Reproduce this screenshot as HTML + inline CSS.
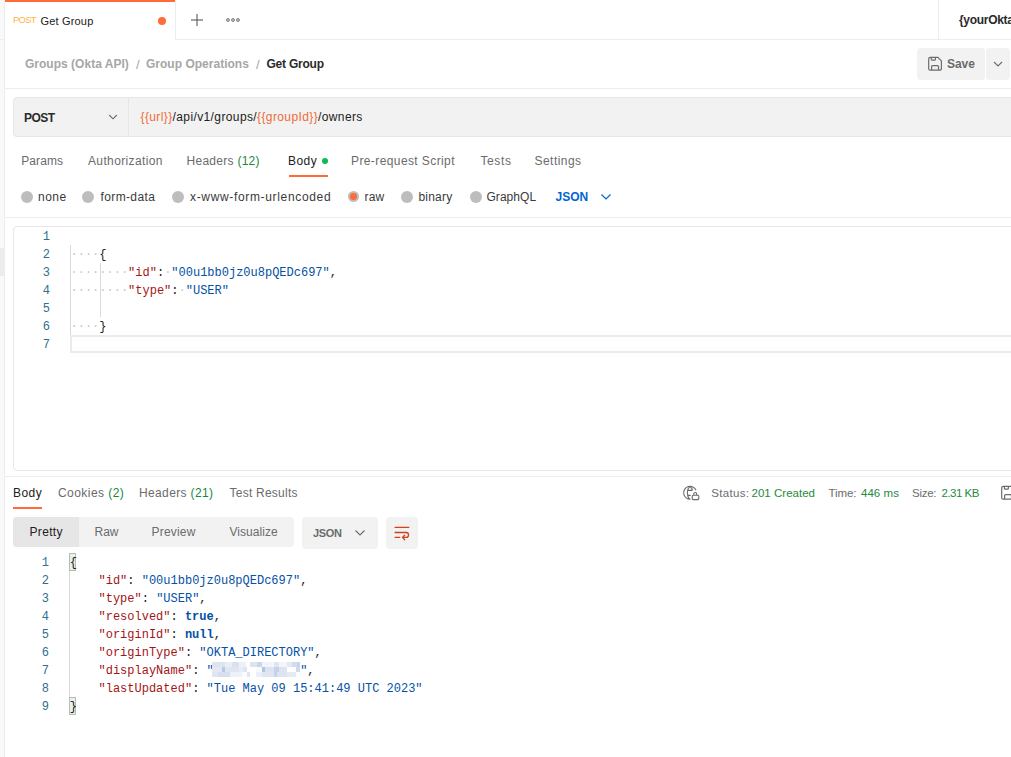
<!DOCTYPE html>
<html><head><meta charset="utf-8"><style>
html,body{margin:0;padding:0;width:1011px;height:757px;overflow:hidden;background:#fff;position:relative}
</style></head><body>
<div style="position:absolute;left:0px;top:0px;width:4px;height:757px;background:#f9f9f9"></div><div style="position:absolute;left:4px;top:0px;width:1px;height:757px;background:#ededed"></div><div style="position:absolute;left:0px;top:248px;width:4px;height:28px;background:#ececec"></div><div style="position:absolute;left:0px;top:39px;width:4px;height:1px;background:#ededed"></div><div style="position:absolute;left:5px;top:39px;width:1006px;height:1px;background:#ededed"></div><div style="position:absolute;left:5px;top:0px;width:170px;height:40px;background:#fff"></div><div style="position:absolute;left:5px;top:0px;width:170px;height:2px;background:#ff6c37"></div><div style="position:absolute;left:175px;top:0px;width:1px;height:39px;background:#ededed"></div><div id="t0" style="position:absolute;left:13.00px;top:14.66px;font-family:'Liberation Sans', sans-serif;font-size:9.5px;font-weight:400;color:#ffb547;line-height:9.5px;white-space:pre;letter-spacing:-0.800px;">POST</div><div id="t1" style="position:absolute;left:40.50px;top:16.39px;font-family:'Liberation Sans', sans-serif;font-size:11px;font-weight:400;color:#212121;line-height:11px;white-space:pre;letter-spacing:0.175px;">Get Group</div><div style="position:absolute;left:158px;top:17px;width:8px;height:8px;border-radius:50%;background:#ff6c37"></div><div style="position:absolute;left:191px;top:19px;width:12px;height:1.5px;background:rgba(90,90,90,.55)"></div><div style="position:absolute;left:196.3px;top:14px;width:1.5px;height:12px;background:rgba(90,90,90,.55)"></div><div style="position:absolute;left:226px;top:18px;width:2.4px;height:2.4px;border-radius:50%;border:1px solid #8a8a8a;background:#bbb"></div><div style="position:absolute;left:231px;top:18px;width:2.4px;height:2.4px;border-radius:50%;border:1px solid #8a8a8a;background:#bbb"></div><div style="position:absolute;left:236px;top:18px;width:2.4px;height:2.4px;border-radius:50%;border:1px solid #8a8a8a;background:#bbb"></div><div style="position:absolute;left:938px;top:0px;width:1px;height:39px;background:#ededed"></div><div id="t2" style="position:absolute;left:959.00px;top:13.74px;font-family:'Liberation Sans', sans-serif;font-size:12px;font-weight:700;color:#2a2a2a;line-height:12px;white-space:pre;letter-spacing:-0.300px;">{yourOkta</div><div id="t3" style="position:absolute;left:25.00px;top:58.34px;font-family:'Liberation Sans', sans-serif;font-size:12px;font-weight:700;color:#a6a6a6;line-height:12px;white-space:pre;letter-spacing:0.012px;">Groups (Okta API)</div><div id="t4" style="position:absolute;left:135.90px;top:57.70px;font-family:'Liberation Sans', sans-serif;font-size:13px;font-weight:400;color:#a6a6a6;line-height:13px;white-space:pre;letter-spacing:0.000px;">/</div><div id="t5" style="position:absolute;left:146.00px;top:58.34px;font-family:'Liberation Sans', sans-serif;font-size:12px;font-weight:700;color:#a6a6a6;line-height:12px;white-space:pre;letter-spacing:0.013px;">Group Operations</div><div id="t6" style="position:absolute;left:255.90px;top:57.70px;font-family:'Liberation Sans', sans-serif;font-size:13px;font-weight:400;color:#a6a6a6;line-height:13px;white-space:pre;letter-spacing:0.000px;">/</div><div id="t7" style="position:absolute;left:266.50px;top:58.34px;font-family:'Liberation Sans', sans-serif;font-size:12px;font-weight:700;color:#2a2a2a;line-height:12px;white-space:pre;letter-spacing:-0.225px;">Get Group</div><div style="position:absolute;left:917px;top:48px;width:68px;height:32px;border-radius:4px;background:#f2f2f2"></div><div style="position:absolute;left:986px;top:48px;width:24px;height:32px;border-radius:4px;background:#f2f2f2"></div><svg style="position:absolute;left:925px;top:54px" width="20" height="20" viewBox="0 0 20 20"><path d="M5.2 3.4H12.9L16.4 6.9V14.7a1.5 1.5 0 0 1 -1.5 1.5H5.2a1.5 1.5 0 0 1 -1.5 -1.5V4.9a1.5 1.5 0 0 1 1.5 -1.5z M6.3 3.4V5.2a1 1 0 0 0 1 1H9.4a1 1 0 0 0 1 -1V3.4 M6.6 16.2V12.6a1 1 0 0 1 1 -1H12.5a1 1 0 0 1 1 1V16.2" fill="none" stroke="#6b6b6b" stroke-width="1.2" stroke-linejoin="round"/></svg><div id="t8" style="position:absolute;left:947.00px;top:57.94px;font-family:'Liberation Sans', sans-serif;font-size:12px;font-weight:700;color:#6b6b6b;line-height:12px;white-space:pre;letter-spacing:-0.067px;">Save</div><svg style="position:absolute;left:993px;top:60px" width="10" height="8" viewBox="0 0 10 8"><path d="M1 2l4 4 4-4" fill="none" stroke="#6b6b6b" stroke-width="1.1"/></svg><div style="position:absolute;left:5px;top:88px;width:1006px;height:1px;background:#ededed"></div><div style="position:absolute;left:13px;top:97px;width:1010px;height:38px;border:1px solid #e6e6e6;border-radius:4px;background:#f2f2f2"></div><div style="position:absolute;left:128px;top:98px;width:1px;height:38px;background:#e6e6e6"></div><div id="t9" style="position:absolute;left:24.00px;top:112.14px;font-family:'Liberation Sans', sans-serif;font-size:12px;font-weight:700;color:#2a2a2a;line-height:12px;white-space:pre;letter-spacing:-0.533px;">POST</div><svg style="position:absolute;left:107px;top:112px" width="12" height="10" viewBox="0 0 12 10"><path d="M2.2 3L6 6.8L9.8 3" fill="none" stroke="#6b6b6b" stroke-width="1.1"/></svg><div id="t10" style="position:absolute;left:140.50px;top:110.94px;font-family:'Liberation Sans', sans-serif;font-size:12px;font-weight:400;color:#212121;line-height:12px;white-space:pre;letter-spacing:0.385px;"><span style="color:#f06c37">{{url}}</span>/api/v1/groups/<span style="color:#f06c37">{{groupId}}</span>/owners</div><div id="t11" style="position:absolute;left:21.25px;top:154.74px;font-family:'Liberation Sans', sans-serif;font-size:12px;font-weight:400;color:#6b6b6b;line-height:12px;white-space:pre;letter-spacing:0.080px;">Params</div><div id="t12" style="position:absolute;left:88.00px;top:154.74px;font-family:'Liberation Sans', sans-serif;font-size:12px;font-weight:400;color:#6b6b6b;line-height:12px;white-space:pre;letter-spacing:0.367px;">Authorization</div><div id="t13" style="position:absolute;left:186.50px;top:154.74px;font-family:'Liberation Sans', sans-serif;font-size:12px;font-weight:400;color:#6b6b6b;line-height:12px;white-space:pre;letter-spacing:0.273px;">Headers <span style="color:#168a3a">(12)</span></div><div id="t14" style="position:absolute;left:288.00px;top:154.74px;font-family:'Liberation Sans', sans-serif;font-size:12px;font-weight:400;color:#212121;line-height:12px;white-space:pre;letter-spacing:0.467px;">Body</div><div style="position:absolute;left:322px;top:158px;width:6px;height:6px;border-radius:50%;background:#0cbb52"></div><div style="position:absolute;left:289px;top:175px;width:39px;height:2px;background:#ff6c37"></div><div id="t15" style="position:absolute;left:351.00px;top:154.74px;font-family:'Liberation Sans', sans-serif;font-size:12px;font-weight:400;color:#6b6b6b;line-height:12px;white-space:pre;letter-spacing:0.400px;">Pre-request Script</div><div id="t16" style="position:absolute;left:480.50px;top:154.74px;font-family:'Liberation Sans', sans-serif;font-size:12px;font-weight:400;color:#6b6b6b;line-height:12px;white-space:pre;letter-spacing:0.600px;">Tests</div><div id="t17" style="position:absolute;left:534.50px;top:154.74px;font-family:'Liberation Sans', sans-serif;font-size:12px;font-weight:400;color:#6b6b6b;line-height:12px;white-space:pre;letter-spacing:0.457px;">Settings</div><div style="position:absolute;left:21px;top:191px;width:12px;height:12px;border-radius:50%;background:#bdbdbd"></div><div id="t18" style="position:absolute;left:38.00px;top:190.64px;font-family:'Liberation Sans', sans-serif;font-size:12px;font-weight:400;color:#3a3a3a;line-height:12px;white-space:pre;letter-spacing:0.467px;">none</div><div style="position:absolute;left:82px;top:191px;width:12px;height:12px;border-radius:50%;background:#bdbdbd"></div><div id="t19" style="position:absolute;left:100.50px;top:190.64px;font-family:'Liberation Sans', sans-serif;font-size:12px;font-weight:400;color:#3a3a3a;line-height:12px;white-space:pre;letter-spacing:0.375px;">form-data</div><div style="position:absolute;left:172px;top:191px;width:12px;height:12px;border-radius:50%;background:#bdbdbd"></div><div id="t20" style="position:absolute;left:190.00px;top:190.64px;font-family:'Liberation Sans', sans-serif;font-size:12px;font-weight:400;color:#3a3a3a;line-height:12px;white-space:pre;letter-spacing:0.660px;">x-www-form-urlencoded</div><div style="position:absolute;left:347.6px;top:191px;width:7px;height:7px;border-radius:50%;border:2.5px solid #bdbdbd;background:#ff6c37"></div><div id="t21" style="position:absolute;left:364.50px;top:190.64px;font-family:'Liberation Sans', sans-serif;font-size:12px;font-weight:400;color:#3a3a3a;line-height:12px;white-space:pre;letter-spacing:0.200px;">raw</div><div style="position:absolute;left:401px;top:191px;width:12px;height:12px;border-radius:50%;background:#bdbdbd"></div><div id="t22" style="position:absolute;left:418.50px;top:190.64px;font-family:'Liberation Sans', sans-serif;font-size:12px;font-weight:400;color:#3a3a3a;line-height:12px;white-space:pre;letter-spacing:0.200px;">binary</div><div style="position:absolute;left:470px;top:191px;width:12px;height:12px;border-radius:50%;background:#bdbdbd"></div><div id="t23" style="position:absolute;left:486.50px;top:190.64px;font-family:'Liberation Sans', sans-serif;font-size:12px;font-weight:400;color:#3a3a3a;line-height:12px;white-space:pre;letter-spacing:0.033px;">GraphQL</div><div id="t24" style="position:absolute;left:555.50px;top:190.64px;font-family:'Liberation Sans', sans-serif;font-size:12px;font-weight:700;color:#0265d2;line-height:12px;white-space:pre;letter-spacing:0.000px;">JSON</div><svg style="position:absolute;left:600px;top:192px" width="12" height="9" viewBox="0 0 12 9"><path d="M1.5 2.5l4.5 4.5 4.5-4.5" fill="none" stroke="#0265d2" stroke-width="1.2"/></svg><div style="position:absolute;left:5px;top:217px;width:1006px;height:1px;background:#ededed"></div><div style="position:absolute;left:13px;top:226px;width:1010px;height:243px;border:1px solid #e6e6e6;border-radius:4px;background:#fff"></div><div style="position:absolute;left:20px;width:30px;text-align:right;top:230.84px;font-family:'Liberation Mono', monospace;font-size:12px;line-height:12px;color:#2d6f8e">1</div><div style="position:absolute;left:70.5px;top:230.84px;font-family:'Liberation Mono', monospace;font-size:12px;line-height:12px;white-space:pre;color:#212121"></div><div style="position:absolute;left:20px;width:30px;text-align:right;top:248.84px;font-family:'Liberation Mono', monospace;font-size:12px;line-height:12px;color:#2d6f8e">2</div><div style="position:absolute;left:70.5px;top:248.84px;font-family:'Liberation Mono', monospace;font-size:12px;line-height:12px;white-space:pre;color:#212121"><span style="color:#c8c8c8">····</span>{</div><div style="position:absolute;left:20px;width:30px;text-align:right;top:266.84px;font-family:'Liberation Mono', monospace;font-size:12px;line-height:12px;color:#2d6f8e">3</div><div style="position:absolute;left:70.5px;top:266.84px;font-family:'Liberation Mono', monospace;font-size:12px;line-height:12px;white-space:pre;color:#212121"><span style="color:#c8c8c8">········</span><span style="color:#a31515">"id"</span>:<span style="color:#c8c8c8">·</span><span style="color:#0451a5">"00u1bb0jz0u8pQEDc697"</span>,</div><div style="position:absolute;left:20px;width:30px;text-align:right;top:284.84px;font-family:'Liberation Mono', monospace;font-size:12px;line-height:12px;color:#2d6f8e">4</div><div style="position:absolute;left:70.5px;top:284.84px;font-family:'Liberation Mono', monospace;font-size:12px;line-height:12px;white-space:pre;color:#212121"><span style="color:#c8c8c8">········</span><span style="color:#a31515">"type"</span>:<span style="color:#c8c8c8">·</span><span style="color:#0451a5">"USER"</span></div><div style="position:absolute;left:20px;width:30px;text-align:right;top:302.84px;font-family:'Liberation Mono', monospace;font-size:12px;line-height:12px;color:#2d6f8e">5</div><div style="position:absolute;left:70.5px;top:302.84px;font-family:'Liberation Mono', monospace;font-size:12px;line-height:12px;white-space:pre;color:#212121"></div><div style="position:absolute;left:20px;width:30px;text-align:right;top:320.84px;font-family:'Liberation Mono', monospace;font-size:12px;line-height:12px;color:#2d6f8e">6</div><div style="position:absolute;left:70.5px;top:320.84px;font-family:'Liberation Mono', monospace;font-size:12px;line-height:12px;white-space:pre;color:#212121"><span style="color:#c8c8c8">····</span>}</div><div style="position:absolute;left:20px;width:30px;text-align:right;top:338.84px;font-family:'Liberation Mono', monospace;font-size:12px;line-height:12px;color:#2d6f8e">7</div><div style="position:absolute;left:70.5px;top:338.84px;font-family:'Liberation Mono', monospace;font-size:12px;line-height:12px;white-space:pre;color:#212121"></div><div style="position:absolute;left:70px;top:245px;width:1px;height:90px;background:#d9d9d9"></div><div style="position:absolute;left:99.5px;top:263px;width:1px;height:54px;background:#d9d9d9"></div><div style="position:absolute;left:70px;top:335px;width:1000px;height:14px;border:2px solid #ebebeb;border-right:none"></div><div style="position:absolute;left:5px;top:476px;width:1006px;height:1px;background:#ededed"></div><div id="t25" style="position:absolute;left:13.00px;top:487.14px;font-family:'Liberation Sans', sans-serif;font-size:12px;font-weight:400;color:#212121;line-height:12px;white-space:pre;letter-spacing:0.467px;">Body</div><div style="position:absolute;left:13px;top:507px;width:29px;height:2px;background:#ff6c37"></div><div id="t26" style="position:absolute;left:58.00px;top:487.14px;font-family:'Liberation Sans', sans-serif;font-size:12px;font-weight:400;color:#6b6b6b;line-height:12px;white-space:pre;letter-spacing:0.440px;">Cookies <span style="color:#168a3a">(2)</span></div><div id="t27" style="position:absolute;left:139.00px;top:487.14px;font-family:'Liberation Sans', sans-serif;font-size:12px;font-weight:400;color:#6b6b6b;line-height:12px;white-space:pre;letter-spacing:0.364px;">Headers <span style="color:#168a3a">(21)</span></div><div id="t28" style="position:absolute;left:229.50px;top:487.14px;font-family:'Liberation Sans', sans-serif;font-size:12px;font-weight:400;color:#6b6b6b;line-height:12px;white-space:pre;letter-spacing:0.236px;">Test Results</div><svg style="position:absolute;left:678px;top:482px" width="26" height="22" viewBox="0 0 26 22"><path d="M18.1 8.2A6.5 6.5 0 1 0 12.5 17.3 M11.7 4.3C8.5 7.5 8.5 14 11.7 17.3 M9.3 8.4H14.5 M9.3 13.4H12.7 M11.7 4.3C13.2 5.5 14.2 7 14.5 8.4 M15.8 13.2V12a1.45 1.45 0 0 1 2.9 0V13.2" fill="none" stroke="#6b6b6b" stroke-width="1.1"/><rect x="14.2" y="13.2" width="6.6" height="4.4" rx="1" fill="#fff" stroke="#6b6b6b" stroke-width="1.1"/></svg><div id="t29" style="position:absolute;left:711.20px;top:488.07px;font-family:'Liberation Sans', sans-serif;font-size:11.5px;font-weight:400;color:#6b6b6b;line-height:11.5px;white-space:pre;letter-spacing:0.333px;">Status:</div><div id="t30" style="position:absolute;left:751.50px;top:488.07px;font-family:'Liberation Sans', sans-serif;font-size:11.5px;font-weight:400;color:#1f8a3e;line-height:11.5px;white-space:pre;letter-spacing:0.020px;">201 Created</div><div id="t31" style="position:absolute;left:828.50px;top:488.07px;font-family:'Liberation Sans', sans-serif;font-size:11.5px;font-weight:400;color:#6b6b6b;line-height:11.5px;white-space:pre;letter-spacing:-0.100px;">Time:</div><div id="t32" style="position:absolute;left:861.00px;top:488.07px;font-family:'Liberation Sans', sans-serif;font-size:11.5px;font-weight:400;color:#1f8a3e;line-height:11.5px;white-space:pre;letter-spacing:0.040px;">446 ms</div><div id="t33" style="position:absolute;left:912.00px;top:488.07px;font-family:'Liberation Sans', sans-serif;font-size:11.5px;font-weight:400;color:#6b6b6b;line-height:11.5px;white-space:pre;letter-spacing:-0.250px;">Size:</div><div id="t34" style="position:absolute;left:941.50px;top:488.07px;font-family:'Liberation Sans', sans-serif;font-size:11.5px;font-weight:400;color:#1f8a3e;line-height:11.5px;white-space:pre;letter-spacing:-0.500px;">2.31 KB</div><svg style="position:absolute;left:997.85px;top:483px" width="20" height="20" viewBox="0 0 20 20"><path d="M5.2 3.4H12.9L16.4 6.9V14.7a1.5 1.5 0 0 1 -1.5 1.5H5.2a1.5 1.5 0 0 1 -1.5 -1.5V4.9a1.5 1.5 0 0 1 1.5 -1.5z M6.3 3.4V5.2a1 1 0 0 0 1 1H9.4a1 1 0 0 0 1 -1V3.4 M6.6 16.2V12.6a1 1 0 0 1 1 -1H12.5a1 1 0 0 1 1 1V16.2" fill="none" stroke="#6b6b6b" stroke-width="1.2" stroke-linejoin="round"/></svg><div style="position:absolute;left:13px;top:517px;width:281px;height:30px;border-radius:4px;background:#f2f2f2;overflow:hidden"><div style="width:66px;height:30px;background:#e6e6e6"></div></div><div id="t35" style="position:absolute;left:29.50px;top:526.14px;font-family:'Liberation Sans', sans-serif;font-size:12px;font-weight:400;color:#212121;line-height:12px;white-space:pre;letter-spacing:0.320px;">Pretty</div><div id="t36" style="position:absolute;left:94.50px;top:526.14px;font-family:'Liberation Sans', sans-serif;font-size:12px;font-weight:400;color:#6b6b6b;line-height:12px;white-space:pre;letter-spacing:0.000px;">Raw</div><div id="t37" style="position:absolute;left:151.50px;top:526.14px;font-family:'Liberation Sans', sans-serif;font-size:12px;font-weight:400;color:#6b6b6b;line-height:12px;white-space:pre;letter-spacing:0.200px;">Preview</div><div id="t38" style="position:absolute;left:229.50px;top:526.14px;font-family:'Liberation Sans', sans-serif;font-size:12px;font-weight:400;color:#6b6b6b;line-height:12px;white-space:pre;letter-spacing:0.050px;">Visualize</div><div style="position:absolute;left:302px;top:517px;width:76px;height:32px;border-radius:4px;background:#f2f2f2"></div><div id="t39" style="position:absolute;left:313.00px;top:527.89px;font-family:'Liberation Sans', sans-serif;font-size:11px;font-weight:700;color:#6b6b6b;line-height:11px;white-space:pre;letter-spacing:-0.333px;">JSON</div><svg style="position:absolute;left:354px;top:528px" width="12" height="9" viewBox="0 0 12 9"><path d="M1.5 2.5l4.5 4.5 4.5-4.5" fill="none" stroke="#6b6b6b" stroke-width="1.1"/></svg><div style="position:absolute;left:386px;top:517px;width:32px;height:32px;border-radius:4px;background:#f2f2f2"></div><svg style="position:absolute;left:393px;top:525px" width="18" height="16" viewBox="0 0 18 16"><path d="M2.1 2.4H15.8 M2.1 7.5H13.1a2.45 2.45 0 0 1 0 4.9H9.5 M2.1 12.4H6.7 M11.6 10.2L9.5 12.4L11.6 14.7" fill="none" stroke="#d4401b" stroke-width="1.3" stroke-linecap="round" stroke-linejoin="round"/></svg><div style="position:absolute;left:69px;top:553px;width:5px;height:16px;border:1px solid #b9b9b9;background:#e6f2e6"></div><div style="position:absolute;left:69px;top:697px;width:5px;height:16px;border:1px solid #b9b9b9;background:#e6f2e6"></div><div style="position:absolute;left:19px;width:30px;text-align:right;top:556.84px;font-family:'Liberation Mono', monospace;font-size:12px;line-height:12px;color:#2d6f8e">1</div><div style="position:absolute;left:69.7px;top:556.84px;font-family:'Liberation Mono', monospace;font-size:12px;line-height:12px;white-space:pre;color:#212121">{</div><div style="position:absolute;left:19px;width:30px;text-align:right;top:574.84px;font-family:'Liberation Mono', monospace;font-size:12px;line-height:12px;color:#2d6f8e">2</div><div style="position:absolute;left:69.7px;top:574.84px;font-family:'Liberation Mono', monospace;font-size:12px;line-height:12px;white-space:pre;color:#212121">    <span style="color:#a31515">"id"</span>: <span style="color:#0451a5">"00u1bb0jz0u8pQEDc697"</span>,</div><div style="position:absolute;left:19px;width:30px;text-align:right;top:592.84px;font-family:'Liberation Mono', monospace;font-size:12px;line-height:12px;color:#2d6f8e">3</div><div style="position:absolute;left:69.7px;top:592.84px;font-family:'Liberation Mono', monospace;font-size:12px;line-height:12px;white-space:pre;color:#212121">    <span style="color:#a31515">"type"</span>: <span style="color:#0451a5">"USER"</span>,</div><div style="position:absolute;left:19px;width:30px;text-align:right;top:610.84px;font-family:'Liberation Mono', monospace;font-size:12px;line-height:12px;color:#2d6f8e">4</div><div style="position:absolute;left:69.7px;top:610.84px;font-family:'Liberation Mono', monospace;font-size:12px;line-height:12px;white-space:pre;color:#212121">    <span style="color:#a31515">"resolved"</span>: <b style="color:#0451a5">true</b>,</div><div style="position:absolute;left:19px;width:30px;text-align:right;top:628.84px;font-family:'Liberation Mono', monospace;font-size:12px;line-height:12px;color:#2d6f8e">5</div><div style="position:absolute;left:69.7px;top:628.84px;font-family:'Liberation Mono', monospace;font-size:12px;line-height:12px;white-space:pre;color:#212121">    <span style="color:#a31515">"originId"</span>: <b style="color:#0451a5">null</b>,</div><div style="position:absolute;left:19px;width:30px;text-align:right;top:646.84px;font-family:'Liberation Mono', monospace;font-size:12px;line-height:12px;color:#2d6f8e">6</div><div style="position:absolute;left:69.7px;top:646.84px;font-family:'Liberation Mono', monospace;font-size:12px;line-height:12px;white-space:pre;color:#212121">    <span style="color:#a31515">"originType"</span>: <span style="color:#0451a5">"OKTA_DIRECTORY"</span>,</div><div style="position:absolute;left:19px;width:30px;text-align:right;top:664.84px;font-family:'Liberation Mono', monospace;font-size:12px;line-height:12px;color:#2d6f8e">7</div><div style="position:absolute;left:69.7px;top:664.84px;font-family:'Liberation Mono', monospace;font-size:12px;line-height:12px;white-space:pre;color:#212121">    <span style="color:#a31515">"displayName"</span>: <span style="color:#0451a5">"<span style="color:transparent">blurrednamex</span>"</span>,</div><div style="position:absolute;left:19px;width:30px;text-align:right;top:682.84px;font-family:'Liberation Mono', monospace;font-size:12px;line-height:12px;color:#2d6f8e">8</div><div style="position:absolute;left:69.7px;top:682.84px;font-family:'Liberation Mono', monospace;font-size:12px;line-height:12px;white-space:pre;color:#212121">    <span style="color:#a31515">"lastUpdated"</span>: <span style="color:#0451a5">"Tue May 09 15:41:49 UTC 2023"</span></div><div style="position:absolute;left:19px;width:30px;text-align:right;top:700.84px;font-family:'Liberation Mono', monospace;font-size:12px;line-height:12px;color:#2d6f8e">9</div><div style="position:absolute;left:69.7px;top:700.84px;font-family:'Liberation Mono', monospace;font-size:12px;line-height:12px;white-space:pre;color:#212121">}</div><div style="position:absolute;left:69px;top:571px;width:1px;height:126px;background:#d9d9d9"></div><div style="position:absolute;left:212px;top:662px;width:13px;height:5px;background:#dde4f1"></div><div style="position:absolute;left:225px;top:662px;width:7px;height:5px;background:#e9edf6"></div><div style="position:absolute;left:232px;top:662px;width:7px;height:5px;background:#d9e1f0"></div><div style="position:absolute;left:239px;top:662px;width:7px;height:5px;background:#eef1f8"></div><div style="position:absolute;left:246px;top:662px;width:4px;height:5px;background:#ffffff"></div><div style="position:absolute;left:250px;top:662px;width:7px;height:5px;background:#dde4f1"></div><div style="position:absolute;left:257px;top:662px;width:5px;height:5px;background:#c9d5ea"></div><div style="position:absolute;left:262px;top:662px;width:10px;height:5px;background:#f2f4fa"></div><div style="position:absolute;left:272px;top:662px;width:2px;height:5px;background:#f7f8fb"></div><div style="position:absolute;left:274px;top:662px;width:5px;height:5px;background:#dfe6f2"></div><div style="position:absolute;left:279px;top:662px;width:8px;height:5px;background:#f3f5fa"></div><div style="position:absolute;left:287px;top:662px;width:5px;height:5px;background:#e3e8f3"></div><div style="position:absolute;left:292px;top:662px;width:5px;height:5px;background:#d3dcee"></div><div style="position:absolute;left:297px;top:662px;width:3px;height:5px;background:#c9d4ea"></div><div style="position:absolute;left:212px;top:667px;width:10px;height:5px;background:#e3e8f3"></div><div style="position:absolute;left:222px;top:667px;width:3px;height:5px;background:#b8c8e4"></div><div style="position:absolute;left:225px;top:667px;width:14px;height:5px;background:#dfe6f2"></div><div style="position:absolute;left:239px;top:667px;width:4px;height:5px;background:#e8ecf5"></div><div style="position:absolute;left:243px;top:667px;width:4px;height:5px;background:#dfe6f2"></div><div style="position:absolute;left:247px;top:667px;width:9px;height:5px;background:#ffffff"></div><div style="position:absolute;left:256px;top:667px;width:6px;height:5px;background:#f8f9fc"></div><div style="position:absolute;left:262px;top:667px;width:3px;height:5px;background:#b3c4e2"></div><div style="position:absolute;left:265px;top:667px;width:9px;height:5px;background:#dde4f1"></div><div style="position:absolute;left:274px;top:667px;width:5px;height:5px;background:#c5d2e9"></div><div style="position:absolute;left:279px;top:667px;width:8px;height:5px;background:#dde4f1"></div><div style="position:absolute;left:287px;top:667px;width:9px;height:5px;background:#ffffff"></div><div style="position:absolute;left:296px;top:667px;width:4px;height:5px;background:#cfd9ed"></div><div style="position:absolute;left:212px;top:672px;width:6px;height:5px;background:#dfe6f2"></div><div style="position:absolute;left:218px;top:672px;width:12px;height:5px;background:#d6def0"></div><div style="position:absolute;left:230px;top:672px;width:12px;height:5px;background:#eef1f8"></div><div style="position:absolute;left:242px;top:672px;width:5px;height:5px;background:#fafbfd"></div><div style="position:absolute;left:247px;top:672px;width:3px;height:5px;background:#dfe6f2"></div><div style="position:absolute;left:250px;top:672px;width:6px;height:5px;background:#ffffff"></div><div style="position:absolute;left:256px;top:672px;width:6px;height:5px;background:#eceff7"></div><div style="position:absolute;left:262px;top:672px;width:12px;height:5px;background:#dfe6f2"></div><div style="position:absolute;left:274px;top:672px;width:3px;height:5px;background:#c5d2e9"></div><div style="position:absolute;left:277px;top:672px;width:10px;height:5px;background:#dde4f1"></div><div style="position:absolute;left:287px;top:672px;width:9px;height:5px;background:#e6eaf4"></div><div style="position:absolute;left:296px;top:672px;width:4px;height:5px;background:#ffffff"></div>
</body></html>
